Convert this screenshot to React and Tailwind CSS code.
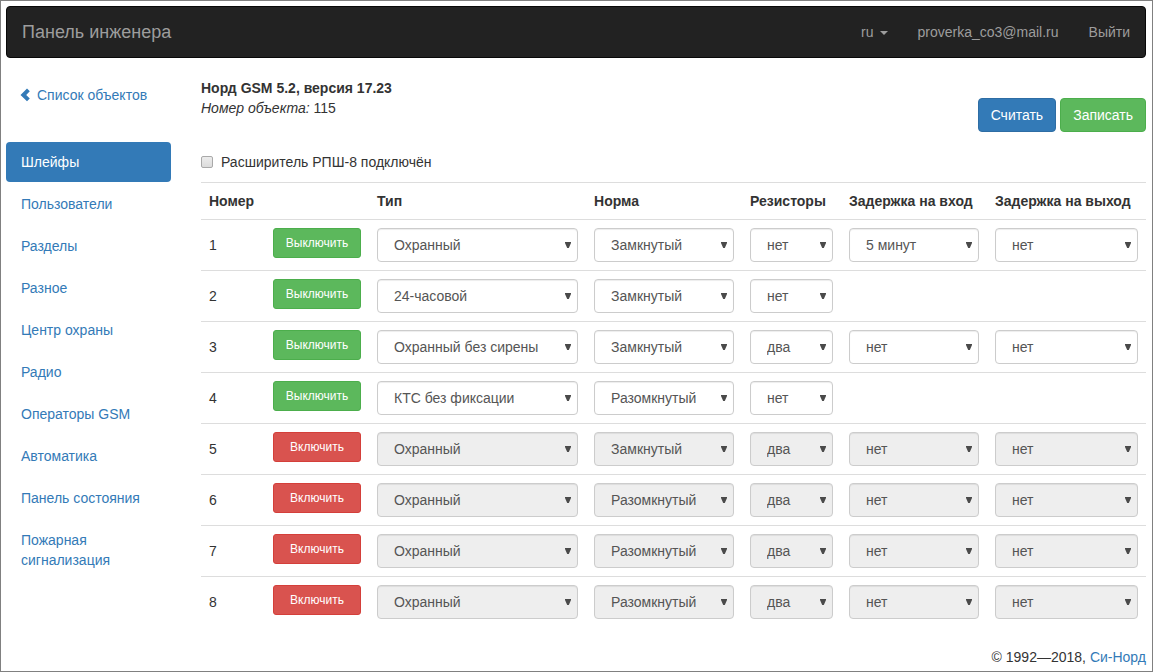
const menu = [
  'Шлейфы',
  'Пользователи',
  'Разделы',
  'Разное',
  'Центр охраны',
  'Радио',
  'Операторы GSM',
  'Автоматика',
  'Панель состояния',
  'Пожарная сигнализация',
];

const columns = [
  { key: 'type', title: 'Тип', options: ['Охранный', '24-часовой', 'Охранный без сирены', 'КТС без фиксации'] },
  { key: 'norm', title: 'Норма', options: ['Замкнутый', 'Разомкнутый'] },
  { key: 'resistors', title: 'Резисторы', options: ['нет', 'один', 'два'] },
  { key: 'entry', title: 'Задержка на вход', options: ['нет', '1 минута', '5 минут'] },
  { key: 'exit', title: 'Задержка на выход', options: ['нет', '1 минута', '5 минут'] },
];

const loops = [
  { id: 1, on: true, type: 'Охранный', norm: 'Замкнутый', resistors: 'нет', entry: '5 минут', exit: 'нет' },
  { id: 2, on: true, type: '24-часовой', norm: 'Замкнутый', resistors: 'нет' },
  { id: 3, on: true, type: 'Охранный без сирены', norm: 'Замкнутый', resistors: 'два', entry: 'нет', exit: 'нет' },
  { id: 4, on: true, type: 'КТС без фиксации', norm: 'Разомкнутый', resistors: 'нет' },
  { id: 5, on: false, type: 'Охранный', norm: 'Замкнутый', resistors: 'два', entry: 'нет', exit: 'нет' },
  { id: 6, on: false, type: 'Охранный', norm: 'Разомкнутый', resistors: 'два', entry: 'нет', exit: 'нет' },
  { id: 7, on: false, type: 'Охранный', norm: 'Разомкнутый', resistors: 'два', entry: 'нет', exit: 'нет' },
  { id: 8, on: false, type: 'Охранный', norm: 'Разомкнутый', resistors: 'два', entry: 'нет', exit: 'нет' },
];

function Select({ label, options, value, disabled }) {
  return (
    <div className="relative">
      <select
        aria-label={label}
        defaultValue={value}
        disabled={disabled}
        className="block h-[34px] w-full appearance-none rounded border border-[#ccc] bg-white pl-4 pr-5 text-[#555] opacity-100 shadow-[inset_0_1px_1px_rgba(0,0,0,0.075)] disabled:bg-[#eee]"
      >
        {options.map((option) => (
          <option key={option}>{option}</option>
        ))}
      </select>
      <svg
        viewBox="0 0 6 6"
        aria-hidden="true"
        className="pointer-events-none absolute right-[7px] top-[14px] size-1.5"
      >
        <path d="M0 0H6V1L3.8 6H2.2L0 1Z" fill="#4a4a4a" />
      </svg>
    </div>
  );
}

function Navbar() {
  return (
    <nav className="flex min-h-[52px] flex-wrap items-center justify-between rounded border border-[#080808] bg-[#222] px-[15px] text-[#9d9d9d]">
      <a href="#home" className="text-lg leading-5">
        Панель инженера
      </a>
      <div className="flex flex-wrap items-center gap-[30px]">
        <a href="#language" className="flex items-center gap-1.5">
          ru
          <svg viewBox="0 0 8 4" aria-hidden="true" className="mt-0.5 h-1 w-2">
            <path d="M0 0H8L4 4Z" fill="currentColor" />
          </svg>
        </a>
        <a href="#account">proverka_co3@mail.ru</a>
        <a href="#logout">Выйти</a>
      </div>
    </nav>
  );
}

function Sidebar() {
  return (
    <aside className="w-[165px] shrink-0 text-[#337ab7]">
      <a href="#objects" className="flex h-[34px] items-center gap-1 pl-[13px]">
        <svg viewBox="0 0 14 14" aria-hidden="true" className="size-3.5">
          <path d="M8 .6 10.8 3.3 7.2 6.9 10.8 10.5 8 13.2 1.5 6.9Z" fill="currentColor" />
        </svg>
        Список объектов
      </a>
      <ul className="mt-[30px] flex flex-col gap-0.5">
        {menu.map((item, i) => (
          <li key={item}>
            <a
              href={'#menu-' + i}
              className={
                i === 0
                  ? 'block rounded bg-[#337ab7] px-[15px] py-2.5 text-white'
                  : 'block rounded px-[15px] py-2.5'
              }
            >
              {item}
            </a>
          </li>
        ))}
      </ul>
    </aside>
  );
}

function LoopTable() {
  return (
    <table className="w-full table-fixed border-separate border-spacing-0">
      <colgroup>
        <col className="w-[64px]" />
        <col className="w-[104px]" />
        <col className="w-[217px]" />
        <col className="w-[156px]" />
        <col className="w-[99px]" />
        <col className="w-[146px]" />
        <col className="w-[159px]" />
      </colgroup>
      <thead>
        <tr className="text-left whitespace-nowrap">
          <th className="border-t border-[#ddd] p-2" colSpan={2}>
            Номер
          </th>
          {columns.map((column) => (
            <th key={column.key} className="border-t border-[#ddd] p-2">
              {column.title}
            </th>
          ))}
        </tr>
      </thead>
      <tbody>
        {loops.map((loop) => (
          <tr key={loop.id}>
            <td className="border-t border-[#ddd] p-2">{loop.id}</td>
            <td className="border-t border-[#ddd] p-2 align-top">
              <button
                type="button"
                className={
                  loop.on
                    ? 'block h-[30px] w-full rounded-[3px] border border-[#4cae4c] bg-[#5cb85c] text-xs text-white'
                    : 'block h-[30px] w-full rounded-[3px] border border-[#d43f3a] bg-[#d9534f] text-xs text-white'
                }
              >
                {loop.on ? 'Выключить' : 'Включить'}
              </button>
            </td>
            {columns.map((column) => (
              <td key={column.key} className="border-t border-[#ddd] p-2">
                {loop[column.key] && (
                  <Select
                    label={column.title}
                    options={column.options}
                    value={loop[column.key]}
                    disabled={!loop.on}
                  />
                )}
              </td>
            ))}
          </tr>
        ))}
      </tbody>
    </table>
  );
}

export default function App() {
  return (
    <div className="border border-[#808080] bg-white pt-[5px] pr-1.5 pb-1 pl-[5px] font-['Liberation_Sans',Arial,sans-serif] text-sm leading-5 text-[#333]">
      <Navbar />
      <div className="mt-5 flex gap-[30px]">
        <Sidebar />
        <main className="min-w-0 flex-1">
          <header className="flex items-start justify-between">
            <div>
              <h1 className="font-bold">Норд GSM 5.2, версия 17.23</h1>
              <p>
                <i>Номер объекта:</i> 115
              </p>
            </div>
            <div className="mt-5 flex gap-1 text-white">
              <button type="button" className="h-[34px] rounded border border-[#2e6da4] bg-[#337ab7] px-3">
                Считать
              </button>
              <button type="button" className="h-[34px] rounded border border-[#4cae4c] bg-[#5cb85c] px-3">
                Записать
              </button>
            </div>
          </header>
          <label className="mt-5 mb-2.5 flex w-fit items-center gap-2">
            <input
              type="checkbox"
              className="size-3 appearance-none rounded-[2px] border border-[#a9a9a9] bg-linear-to-b from-[#ececec] to-[#dcdcdc] checked:bg-[#337ab7]"
            />
            Расширитель РПШ-8 подключён
          </label>
          <LoopTable />
        </main>
      </div>
      <footer className="mt-5 text-right">
        © 1992—2018, <a href="#nord" className="text-[#337ab7]">Си-Норд</a>
      </footer>
    </div>
  );
}
